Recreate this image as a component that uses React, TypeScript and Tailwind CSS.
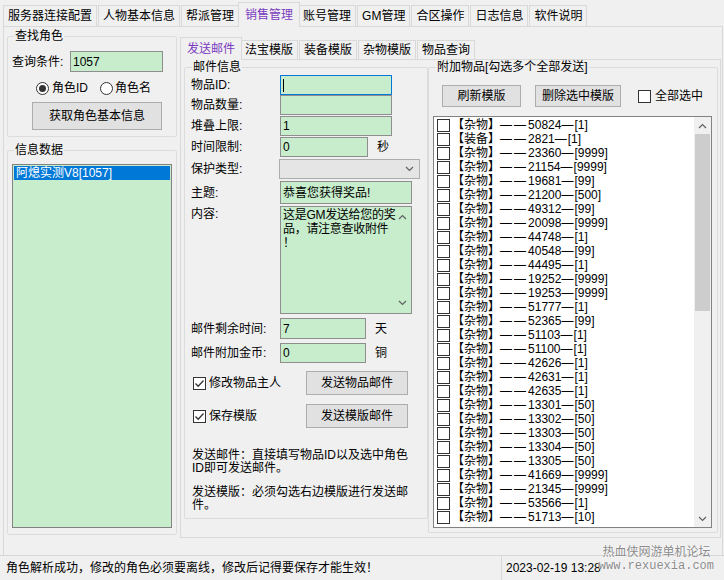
import React from "react";

const FONT = "font-['Liberation_Sans','Noto_Sans_CJK_SC',sans-serif]";

function Check({ checked }: { checked?: boolean }) {
  return (
    <span className="w-[13px] h-[13px] border border-[#333333] bg-white flex items-center justify-center shrink-0">
      {checked && (
        <svg width="11" height="11" viewBox="0 0 11 11">
          <path d="M1.5 5.5 L4.2 8.2 L9.5 2.5" fill="none" stroke="#333333" strokeWidth="1.3" />
        </svg>
      )}
    </span>
  );
}

function Radio({ checked }: { checked?: boolean }) {
  return (
    <span className="w-[13px] h-[13px] rounded-full border border-[#333333] bg-white flex items-center justify-center shrink-0">
      {checked && <span className="w-[7px] h-[7px] rounded-full bg-[#333333]" />}
    </span>
  );
}

function Btn({ children, className }: { children: React.ReactNode; className: string }) {
  return (
    <div className={`bg-[#e1e1e1] border border-[#adadad] flex items-center justify-center text-[12px] leading-[14px] shrink-0 ${className}`}>
      {children}
    </div>
  );
}

function Tab({ label, selected }: { label: string; selected?: boolean }) {
  if (selected)
    return (
      <div className="relative z-10 -mx-[2px] -mb-px h-[25px] px-[6px] border border-b-0 border-[#d9d9d9] bg-[#f0f0f0] text-[#7b3cbf] flex items-center leading-[14px] shrink-0">
        {label}
      </div>
    );
  return (
    <div className="h-[21px] px-[4px] mr-[1px] border border-b-0 border-[#d9d9d9] bg-[#f0f0f0] flex items-center leading-[14px] shrink-0">
      {label}
    </div>
  );
}

function SubTab({ label, selected }: { label: string; selected?: boolean }) {
  if (selected)
    return (
      <div className="relative z-10 -mx-[2px] -mb-px h-[23px] px-[6px] border border-b-0 border-[#d9d9d9] bg-[#f0f0f0] text-[#7b3cbf] flex items-center leading-[14px] shrink-0">
        {label}
      </div>
    );
  return (
    <div className="h-[19px] px-[4px] mr-[1px] border border-b-0 border-[#d9d9d9] bg-[#f0f0f0] flex items-center leading-[14px] shrink-0">
      {label}
    </div>
  );
}

function Field({
  label,
  w,
  h,
  value,
  focus,
  suffix,
  mt,
}: {
  label: string;
  w: string;
  h: string;
  value?: string;
  focus?: boolean;
  suffix?: string;
  mt: string;
}) {
  return (
    <div className={`flex items-center ${mt}`}>
      <div className="w-[89px] leading-[14px] shrink-0">{label}</div>
      <div
        className={`${w} ${h} bg-[#c7edcc] border ${focus ? "border-[#0078d7]" : "border-[#8e8e8e]"} flex items-center pl-[2px] leading-[14px] shrink-0`}
      >
        {focus && <span className="w-px h-[13px] bg-black" />}
        {value}
      </div>
      {suffix && <div className="ml-[9px] leading-[14px]">{suffix}</div>}
    </div>
  );
}

const items: [string, string, string][] = [
  ["杂物", "50824", "1"],
  ["装备", "2821", "1"],
  ["杂物", "23360", "9999"],
  ["杂物", "21154", "9999"],
  ["杂物", "19681", "99"],
  ["杂物", "21200", "500"],
  ["杂物", "49312", "99"],
  ["杂物", "20098", "9999"],
  ["杂物", "44748", "1"],
  ["杂物", "40548", "99"],
  ["杂物", "44495", "1"],
  ["杂物", "19252", "9999"],
  ["杂物", "19253", "9999"],
  ["杂物", "51777", "1"],
  ["杂物", "52365", "99"],
  ["杂物", "51103", "1"],
  ["杂物", "51100", "1"],
  ["杂物", "42626", "1"],
  ["杂物", "42631", "1"],
  ["杂物", "42635", "1"],
  ["杂物", "13301", "50"],
  ["杂物", "13302", "50"],
  ["杂物", "13303", "50"],
  ["杂物", "13304", "50"],
  ["杂物", "13305", "50"],
  ["杂物", "41669", "9999"],
  ["杂物", "21345", "9999"],
  ["杂物", "53566", "1"],
  ["杂物", "51713", "10"],
];

function Chevron({ up }: { up?: boolean }) {
  return (
    <svg width="9" height="6" viewBox="0 0 9 6">
      <path d={up ? "M1 5 L4.5 1.5 L8 5" : "M1 1 L4.5 4.5 L8 1"} fill="none" stroke="#606060" strokeWidth="1.2" />
    </svg>
  );
}

export default function App() {
  const mainTabs = ["服务器连接配置", "人物基本信息", "帮派管理", "销售管理", "账号管理", "GM管理", "合区操作", "日志信息", "软件说明"];
  const subTabs = ["发送邮件", "法宝模版", "装备模版", "杂物模版", "物品查询"];
  return (
    <div className={`w-[724px] h-[580px] bg-[#f0f0f0] relative overflow-hidden text-[12px] text-black ${FONT}`}>
      {/* main tabs */}
      <div className="flex items-end h-[26px] pl-[3px]">
        {mainTabs.map((t) => (
          <Tab key={t} label={t} selected={t === "销售管理"} />
        ))}
      </div>
      {/* main panel */}
      <div className="flex h-[529px] w-[720px] ml-[3px] border-l border-t border-r border-[#d9d9d9]">
        {/* left column */}
        <div className="w-[170px] ml-[3px] flex flex-col shrink-0">
          <fieldset className="mt-[2px] h-[108px] border border-[#dcdcdc] rounded-[2px] px-[4px]">
            <legend className="ml-[2px] px-[1px] leading-[14px]">查找角色</legend>
            <div className="flex items-center mt-[8px]">
              <div className="w-[58px] leading-[14px]">查询条件:</div>
              <div className="w-[93px] h-[21px] bg-[#c7edcc] border border-[#8e8e8e] flex items-center pl-[2px] leading-[14px]">1057</div>
            </div>
            <div className="flex items-center mt-[9px] ml-[24px] h-[14px]">
              <Radio checked />
              <span className="ml-[3px] leading-[14px]">角色ID</span>
              <span className="ml-[12px]" />
              <Radio />
              <span className="ml-[2px] leading-[14px]">角色名</span>
            </div>
            <Btn className="mt-[7px] ml-[20px] w-[130px] h-[28px]">获取角色基本信息</Btn>
          </fieldset>
          <fieldset className="mt-[6px] h-[392px] border border-[#dcdcdc] rounded-[2px] px-[4px]">
            <legend className="ml-[2px] px-[1px] leading-[14px]">信息数据</legend>
            <div className="mt-[7px] w-[160px] h-[364px] bg-[#c7edcc] border border-[#828282] p-px">
              <div className="h-[14px] bg-[#0078d7] text-white leading-[14px] pl-[2px]">阿熄实测V8[1057]</div>
            </div>
          </fieldset>
        </div>
        {/* right column */}
        <div className="ml-[3px] flex flex-col">
          <div className="flex items-end h-[32px] pl-[2px]">
            {subTabs.map((t) => (
              <SubTab key={t} label={t} selected={t === "发送邮件"} />
            ))}
          </div>
          <div className="w-[541px] h-[479px] border border-[#d9d9d9] flex items-start">
            {/* mail info */}
            <fieldset className="ml-[3px] w-[244px] h-[459px] border border-[#dcdcdc] rounded-[2px] pl-[6px]">
              <legend className="ml-[1px] px-[1px] leading-[14px]">邮件信息</legend>
              <Field label="物品ID:" w="w-[112px]" h="h-[20px]" focus mt="mt-[1px]" />
              <Field label="物品数量:" w="w-[112px]" h="h-[20px]" mt="mt-0" />
              <Field label="堆叠上限:" w="w-[112px]" h="h-[20px]" value="1" mt="mt-[1px]" />
              <Field label="时间限制:" w="w-[88px]" h="h-[20px]" value="0" suffix="秒" mt="mt-[1px]" />
              <div className="flex items-center mt-[2px]">
                <div className="w-[88px] leading-[14px] shrink-0">保护类型:</div>
                <div className="w-[141px] h-[20px] bg-[#e5e5e5] border border-[#adadad] flex items-center justify-end pr-[5px]">
                  <Chevron />
                </div>
              </div>
              <div className="flex items-center mt-[2px]">
                <div className="w-[89px] leading-[14px] shrink-0">主题:</div>
                <div className="w-[132px] h-[23px] bg-[#c7edcc] border border-[#8e8e8e] flex items-center pl-[2px] leading-[14px]">恭喜您获得奖品!</div>
              </div>
              <div className="flex items-start mt-[2px]">
                <div className="w-[89px] leading-[14px] shrink-0 mt-[1px]">内容:</div>
                <div className="w-[132px] h-[108px] bg-[#c7edcc] border border-[#8e8e8e] flex">
                  <div className="w-[113px] shrink-0 pl-[2px] pt-[1px] leading-[14px] whitespace-nowrap tracking-[-0.3px]">
                    这是GM发送给您的奖
                    <br />
                    品，请注意查收附件
                    <br />！
                  </div>
                  <div className="flex-1 flex flex-col items-center justify-between py-[7px]">
                    <Chevron up />
                    <Chevron />
                  </div>
                </div>
              </div>
              <Field label="邮件剩余时间:" w="w-[86px]" h="h-[21px]" value="7" suffix="天" mt="mt-[4px]" />
              <Field label="邮件附加金币:" w="w-[86px]" h="h-[20px]" value="0" suffix="铜" mt="mt-[4px]" />
              <div className="flex items-center mt-[8px]">
                <div className="w-[115px] flex items-center pl-[2px]">
                  <Check checked />
                  <span className="ml-[3px] leading-[14px]">修改物品主人</span>
                </div>
                <Btn className="w-[102px] h-[24px]">发送物品邮件</Btn>
              </div>
              <div className="flex items-center mt-[9px]">
                <div className="w-[115px] flex items-center pl-[2px]">
                  <Check checked />
                  <span className="ml-[3px] leading-[14px]">保存模版</span>
                </div>
                <Btn className="w-[102px] h-[24px]">发送模版邮件</Btn>
              </div>
              <div className="mt-[21px] leading-[13px] pl-px">
                发送邮件：直接填写物品ID以及选中角色
                <br />
                ID即可发送邮件。
              </div>
              <div className="mt-[11px] leading-[13px] pl-px">
                发送模版：必须勾选右边模版进行发送邮
                <br />
                件。
              </div>
            </fieldset>
            {/* attached items */}
            <fieldset className="w-[290px] h-[473px] border border-[#dcdcdc] rounded-[2px] pl-[4px]">
              <legend className="ml-[3px] px-[1px] leading-[14px]">附加物品[勾选多个全部发送]</legend>
              <div className="flex items-center mt-[11px]">
                <Btn className="ml-[9px] w-[79px] h-[22px]">刷新模版</Btn>
                <Btn className="ml-[14px] w-[86px] h-[22px]">删除选中模版</Btn>
                <span className="ml-[17px]" />
                <Check />
                <span className="ml-[4px] leading-[14px]">全部选中</span>
              </div>
              <div className="mt-[9px] w-[279px] h-[412px] bg-white border border-[#828282] flex overflow-hidden">
                <div className="flex-1 pt-px pl-[3px] overflow-hidden">
                  {items.map(([k, id, n], i) => (
                    <div key={i} className="h-[14px] flex items-center">
                      <Check />
                      <span className="ml-[2px] leading-[14px] whitespace-nowrap">
                        【{k}】<span className="tracking-[2px]">——</span>
                        {id}
                        <span className="tracking-[1px]">—</span>[{n}]
                      </span>
                    </div>
                  ))}
                </div>
                <div className="w-[17px] bg-[#f0f0f0] flex flex-col items-center">
                  <div className="h-[17px] flex items-center justify-center">
                    <Chevron up />
                  </div>
                  <div className="w-[15px] h-[177px] bg-[#cdcdcd]" />
                  <div className="flex-1" />
                  <div className="h-[17px] flex items-center justify-center">
                    <Chevron />
                  </div>
                </div>
              </div>
            </fieldset>
          </div>
        </div>
      </div>
      {/* status bar */}
      <div className="h-[25px] border-t border-[#d7d7d7] flex items-center">
        <div className="w-[502px] h-full flex items-center pl-[6px] border-r border-[#d7d7d7] leading-[14px]">
          角色解析成功，修改的角色必须要离线，修改后记得要保存才能生效！
        </div>
        <div className="pl-[4px] leading-[14px]">2023-02-19 13:28</div>
      </div>
      {/* watermark */}
      <div className="absolute right-[10px] bottom-[7px] flex flex-col items-center text-[#8a8a8a] [text-shadow:0_0_1px_#fff,0_0_2px_#fff]">
        <div className="text-[12px] leading-[14px]">热血侠网游单机论坛</div>
        <div className="font-['Liberation_Mono',monospace] text-[12px] leading-[14px]">www.rexuexia.com</div>
      </div>
    </div>
  );
}
